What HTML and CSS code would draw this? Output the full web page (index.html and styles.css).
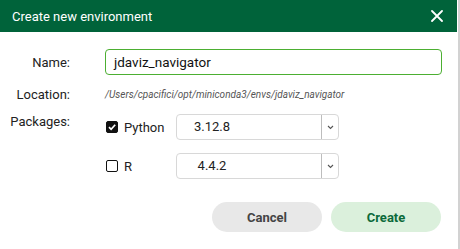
FILE: index.html
```html
<!DOCTYPE html>
<html lang="en">
<head>
  <meta charset="UTF-8">
  <title>Create new environment</title>
  <link rel="stylesheet" href="styles.css">
</head>
<body>
  <div class="dialog">
    <div class="dialog-header">
      <span class="dialog-title">Create new environment</span>
      <svg class="close-icon" width="12" height="12" viewBox="0 0 12 12">
        <path d="M1 1 L11 11 M11 1 L1 11" stroke="#fff" stroke-width="1.8" stroke-linecap="round"/>
      </svg>
    </div>
    <div class="dialog-body">
      <div class="form-grid">
        <label class="field-label" for="env-name">Name:</label>
        <div class="name-input" id="env-name">jdaviz_navigator</div>

        <span class="field-label">Location:</span>
        <span class="location-path">/Users/cpacifici/opt/miniconda3/envs/jdaviz_navigator</span>

        <span class="field-label packages-label">Packages:</span>
        <div class="packages">
          <div class="package-row">
            <div class="package-check">
              <span class="checkbox checked">
                <svg width="10" height="10" viewBox="0 0 10 10">
                  <path d="M2 5.2 L4.1 7.3 L8.2 2.8" fill="none" stroke="#fff" stroke-width="1.7"/>
                </svg>
              </span>
              <span class="package-name">Python</span>
            </div>
            <div class="version-select">
              <span class="version-value">3.12.8</span>
              <span class="select-arrow">
                <svg width="7" height="5" viewBox="0 0 7 5">
                  <path d="M1 1 L3.5 3.5 L6 1" fill="none" stroke="#555" stroke-width="1.1"/>
                </svg>
              </span>
            </div>
          </div>
          <div class="package-row">
            <div class="package-check">
              <span class="checkbox"></span>
              <span class="package-name">R</span>
            </div>
            <div class="version-select">
              <span class="version-value">4.4.2</span>
              <span class="select-arrow">
                <svg width="7" height="5" viewBox="0 0 7 5">
                  <path d="M1 1 L3.5 3.5 L6 1" fill="none" stroke="#555" stroke-width="1.1"/>
                </svg>
              </span>
            </div>
          </div>
        </div>
      </div>

      <div class="dialog-buttons">
        <button type="button" class="btn btn-cancel">Cancel</button>
        <button type="button" class="btn btn-create">Create</button>
      </div>
    </div>
  </div>
  <div class="side-bar"></div>
</body>
</html>
```

FILE: styles.css
```css
body {
  margin: 0;
  background: #fff;
  font-family: Roboto, "Liberation Sans", sans-serif;
  color: #222;
  display: flex;
  height: 249px;
  overflow: hidden;
}
.dialog {
  width: 457px;
  display: flex;
  flex-direction: column;
}
.dialog-header {
  height: 32px;
  background: #00633a;
  color: #fff;
  display: flex;
  align-items: center;
  justify-content: space-between;
  padding: 0 14px 0 12px;
}
.dialog-title {
  font-size: 13px;
}
.close-icon {
  display: block;
}
.dialog-body {
  padding: 17px 15px 0 0;
}
.form-grid {
  display: grid;
  grid-template-columns: 70px 1fr;
  column-gap: 35px;
  row-gap: 12px;
  align-items: center;
}
.field-label {
  text-align: right;
  font-size: 13px;
  color: #222;
}
.packages-label {
  align-self: start;
}
.name-input {
  height: 26px;
  box-sizing: border-box;
  border: 1.5px solid #4caf32;
  border-radius: 4px;
  padding: 0 8px;
  display: flex;
  align-items: center;
  font-size: 13.5px;
  color: #111;
}
.location-path {
  font-size: 10px;
  font-style: italic;
  color: #555;
  height: 14px;
  line-height: 14px;
}
.packages {
  display: flex;
  flex-direction: column;
  gap: 13px;
}
.package-row {
  display: flex;
  align-items: center;
}
.package-check {
  width: 71px;
  display: flex;
  align-items: center;
  gap: 6px;
  padding-left: 1px;
  box-sizing: border-box;
}
.checkbox {
  width: 12px;
  height: 12px;
  box-sizing: border-box;
  border: 1.5px solid #111;
  border-radius: 2px;
  display: flex;
  align-items: center;
  justify-content: center;
}
.checkbox.checked {
  background: #111;
}
.checkbox svg {
  display: block;
}
.package-name {
  font-size: 13px;
  color: #222;
}
.version-select {
  width: 163px;
  height: 26px;
  box-sizing: border-box;
  border: 1px solid #d8d8d8;
  border-radius: 4px;
  display: flex;
  align-items: stretch;
}
.version-value {
  width: 70px;
  text-align: center;
  font-size: 13px;
  line-height: 24px;
  color: #222;
}
.select-arrow {
  margin-left: auto;
  width: 16px;
  border-left: 1px solid #bdbdbd;
  display: flex;
  align-items: center;
  justify-content: center;
}
.select-arrow svg {
  display: block;
}
.dialog-buttons {
  display: flex;
  justify-content: flex-end;
  gap: 9px;
  margin-top: 23px;
  padding-right: 1px;
}
.btn {
  width: 110px;
  height: 30px;
  border: none;
  border-radius: 15px;
  font-family: inherit;
  font-size: 13px;
  font-weight: bold;
  cursor: pointer;
}
.btn-cancel {
  background: #e8e8e8;
  color: #444;
}
.btn-create {
  background: #dbf0dc;
  color: #0b6a3a;
}
.side-bar {
  width: 2px;
  margin-left: 1px;
  background: #d2d2d2;
}
```
